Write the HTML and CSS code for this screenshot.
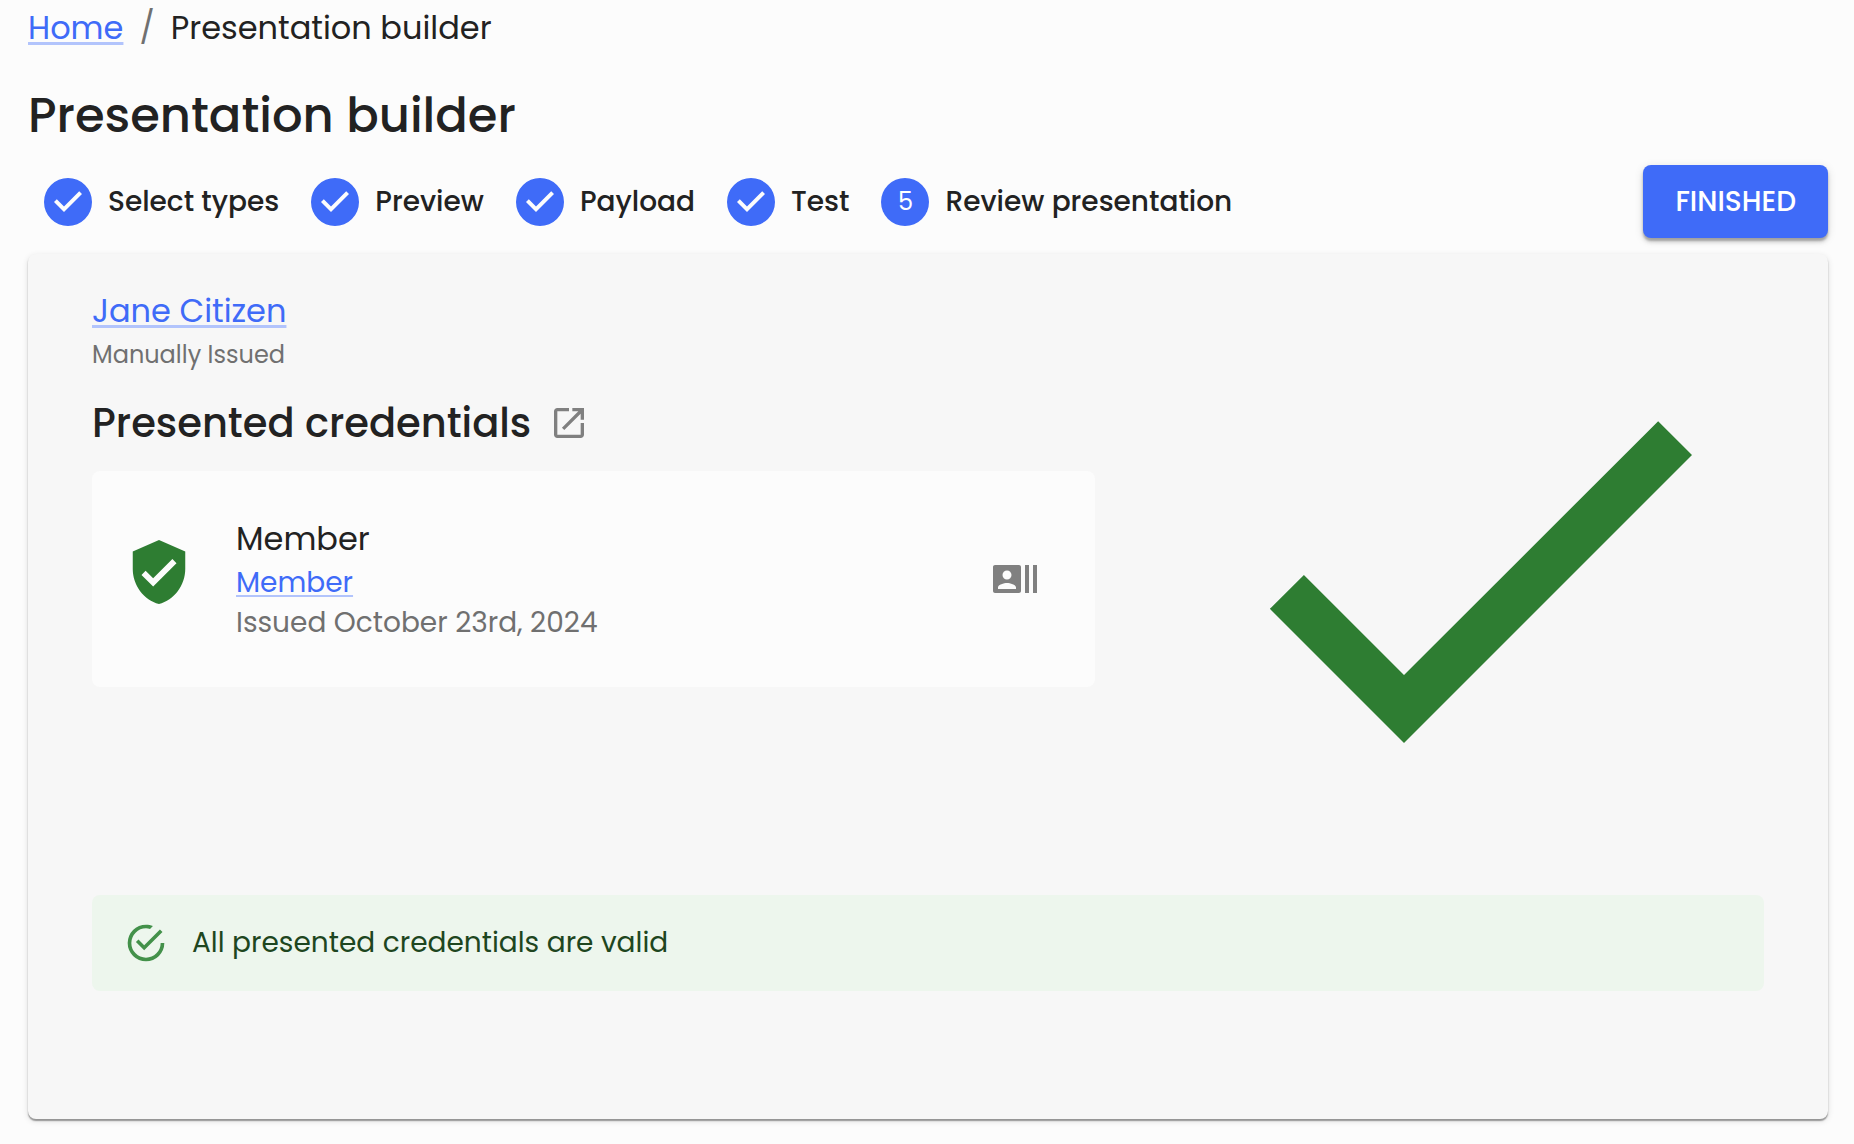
FILE: index.html
```html
<!DOCTYPE html>
<html lang="en">
<head>
    <meta charset="UTF-8">
    <meta name="viewport" content="width=device-width, initial-scale=1.0">
    <title>Presentation builder</title>
    <link rel="stylesheet" href="styles.css">
</head>
<body>
    <nav class="breadcrumbs" aria-label="Breadcrumb">
        <a class="link" href="#">Home</a>
        <span class="separator">/</span>
        <span>Presentation builder</span>
    </nav>

    <h1>Presentation builder</h1>

    <div class="toolbar">
        <ol class="steps">
            <li class="step">
                <svg class="step-icon" viewBox="0 0 24 24"><path d="M12 0a12 12 0 1 0 0 24 12 12 0 0 0 0-24zm-2 17l-5-5 1.4-1.4 3.6 3.6 7.6-7.6L19 8l-9 9z"/></svg>
                <span>Select types</span>
            </li>
            <li class="step">
                <svg class="step-icon" viewBox="0 0 24 24"><path d="M12 0a12 12 0 1 0 0 24 12 12 0 0 0 0-24zm-2 17l-5-5 1.4-1.4 3.6 3.6 7.6-7.6L19 8l-9 9z"/></svg>
                <span>Preview</span>
            </li>
            <li class="step">
                <svg class="step-icon" viewBox="0 0 24 24"><path d="M12 0a12 12 0 1 0 0 24 12 12 0 0 0 0-24zm-2 17l-5-5 1.4-1.4 3.6 3.6 7.6-7.6L19 8l-9 9z"/></svg>
                <span>Payload</span>
            </li>
            <li class="step">
                <svg class="step-icon" viewBox="0 0 24 24"><path d="M12 0a12 12 0 1 0 0 24 12 12 0 0 0 0-24zm-2 17l-5-5 1.4-1.4 3.6 3.6 7.6-7.6L19 8l-9 9z"/></svg>
                <span>Test</span>
            </li>
            <li class="step" aria-current="step">
                <span class="step-number">5</span>
                <span>Review presentation</span>
            </li>
        </ol>
        <button type="button" class="finish">FINISHED</button>
    </div>

    <main class="panel">
        <div class="result">
            <section class="details">
                <div class="identity"><a class="link" href="#">Jane Citizen</a></div>
                <div class="issuance">Manually Issued</div>

                <h2>
                    Presented credentials
                    <a class="open" href="#" aria-label="Open presentation">
                        <svg viewBox="0 0 24 24"><path d="M19 19H5V5h7V3H5c-1.11 0-2 .9-2 2v14c0 1.1.89 2 2 2h14c1.1 0 2-.9 2-2v-7h-2v7zM14 3v2h3.59l-9.83 9.83 1.41 1.41L19 6.41V10h2V3h-7z"/></svg>
                    </a>
                </h2>

                <div class="credential">
                    <svg class="shield" viewBox="0 0 24 24"><path d="M12 1 3 5v6c0 5.55 3.84 10.74 9 12 5.16-1.26 9-6.45 9-12V5l-9-4zm-2 16-4-4 1.41-1.41L10 14.17l6.59-6.59L18 9l-8 8z"/></svg>
                    <div class="credential-text">
                        <div class="credential-name">Member</div>
                        <div><a class="link link-small" href="#">Member</a></div>
                        <div class="issued">Issued October 23rd, 2024</div>
                    </div>
                    <svg class="type-icon" viewBox="0 0 24 24"><path d="M21 5v14h2V5h-2zm-4 14h2V5h-2v14zM14 5H2c-.55 0-1 .45-1 1v12c0 .55.45 1 1 1h12c.55 0 1-.45 1-1V6c0-.55-.45-1-1-1zM8 7.75c1.24 0 2.25 1.01 2.25 2.25S9.24 12.25 8 12.25 5.75 11.24 5.75 10 6.76 7.75 8 7.75zM12.5 17h-9v-.75c0-1.5 3-2.25 4.5-2.25s4.5.75 4.5 2.25V17z"/></svg>
                </div>
            </section>

            <svg class="big-check" viewBox="0 0 24 24" role="img" aria-label="Valid"><path d="M9 16.17 4.83 12l-1.42 1.41L9 19 21 7l-1.41-1.41z"/></svg>
        </div>

        <div class="alert" role="alert">
            <svg class="alert-icon" viewBox="0 0 24 24"><path d="M20,12A8,8 0 0,1 12,20A8,8 0 0,1 4,12A8,8 0 0,1 12,4C12.76,4 13.5,4.11 14.2,4.31L15.77,2.74C14.61,2.26 13.34,2 12,2A10,10 0 0,0 2,12A10,10 0 0,0 12,22A10,10 0 0,0 22,12M7.91,10.08L6.5,11.5L11,16L21,6L19.59,4.58L11,13.17L7.91,10.08Z"/></svg>
            <span>All presented credentials are valid</span>
        </div>
    </main>
</body>
</html>
```
FILE: styles.css
```css
* {
    box-sizing: border-box;
}
body {
    margin: 0;
    padding: 4px 26px 25px 28px;
    background: #fcfcfc;
    color: #222;
    font-family: Poppins, Inter, "Open Sans", sans-serif;
    font-size: 32px;
    line-height: 48px;
}
svg {
    display: block;
    flex: none;
    fill: currentColor;
}
.link {
    color: #3f6bf8;
    text-decoration: underline;
    text-decoration-color: #b2c4fc;
    text-decoration-thickness: 3px;
    text-underline-offset: 3px;
    text-decoration-skip-ink: none;
}
.link-small {
    text-decoration-thickness: 2px;
}
.breadcrumbs {
    display: flex;
}
.separator {
    margin: 0 16px;
    color: #707070;
}
h1 {
    margin: 36px 0 21px;
    font-size: 48px;
    font-weight: 500;
    line-height: 56px;
}
.toolbar {
    display: flex;
    justify-content: space-between;
    align-items: center;
}
.steps {
    display: flex;
    gap: 32px;
    margin: 0;
    padding: 0 16px;
    list-style: none;
    font-size: 28px;
    font-weight: 500;
}
.step {
    display: flex;
    align-items: center;
    gap: 16px;
}
.step-icon {
    width: 48px;
    height: 48px;
    color: #3f6bf8;
}
.step-number {
    width: 48px;
    height: 48px;
    border-radius: 50%;
    background: #3f6bf8;
    color: #fff;
    font-size: 24px;
    font-weight: 400;
    text-align: center;
}
.finish {
    padding: 12px 32px;
    border: none;
    border-radius: 8px;
    background: #3f6bf8;
    color: #fff;
    font-family: inherit;
    font-size: 28px;
    font-weight: 500;
    line-height: 49px;
    cursor: pointer;
    box-shadow: 0 3px 2px rgba(0, 0, 0, 0.2), 0 4px 4px rgba(0, 0, 0, 0.14), 0 2px 10px rgba(0, 0, 0, 0.12);
}
.panel {
    margin-top: 16px;
    padding: 33px 64px 128px;
    border-radius: 8px;
    background: #f7f7f7;
    box-shadow: 0 2px 1px rgba(0, 0, 0, 0.25), 0 2px 2px rgba(0, 0, 0, 0.14), 0 2px 6px rgba(0, 0, 0, 0.12);
}
.result {
    display: flex;
    justify-content: space-between;
    margin-bottom: 32px;
}
.details {
    width: 60%;
}
.issuance {
    color: #707070;
    font-size: 24px;
    line-height: 40px;
}
h2 {
    display: flex;
    align-items: center;
    gap: 18px;
    margin: 18px 0;
    font-size: 40px;
    font-weight: 500;
    line-height: 60px;
}
.open {
    width: 40px;
    color: #808080;
}
.credential {
    display: flex;
    align-items: center;
    gap: 42px;
    padding: 44px 56px 44px 32px;
    border-radius: 8px;
    background: #fcfcfc;
    font-size: 28px;
    line-height: 40px;
}
.shield {
    width: 70px;
    margin-bottom: 14px;
    color: #2e7d32;
}
.credential-text {
    flex: 1;
}
.credential-name {
    font-size: 32px;
    line-height: 48px;
}
.issued {
    color: #707070;
}
.type-icon {
    width: 48px;
    color: #808080;
}
.big-check {
    width: 576px;
    height: 576px;
    color: #2e7d32;
}
.alert {
    display: flex;
    align-items: center;
    gap: 24px;
    padding: 24px 32px;
    border-radius: 8px;
    background: #edf6ed;
    color: #1e4620;
    font-size: 28px;
}
.alert-icon {
    width: 44px;
    color: #43914a;
}
```
